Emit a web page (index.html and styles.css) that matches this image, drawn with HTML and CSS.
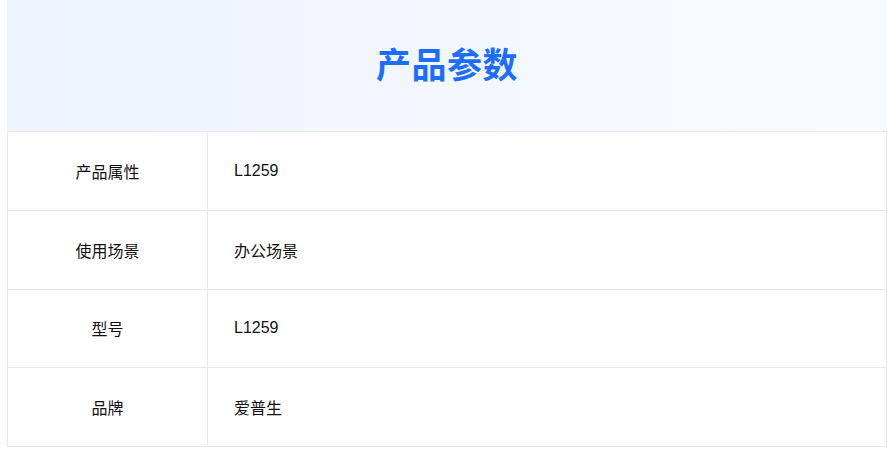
FILE: index.html
```html
<!DOCTYPE html>
<html lang="zh">
<head>
<meta charset="utf-8">
<link rel="stylesheet" href="styles.css">
</head>
<body>
<div class="params">
  <div class="params-head"><h2 class="params-title">产品参数</h2></div>
  <div class="params-table">
    <div class="row"><div class="cell label">产品属性</div><div class="cell value">L1259</div></div>
    <div class="row"><div class="cell label">使用场景</div><div class="cell value">办公场景</div></div>
    <div class="row"><div class="cell label">型号</div><div class="cell value">L1259</div></div>
    <div class="row"><div class="cell label">品牌</div><div class="cell value">爱普生</div></div>
  </div>
</div>
</body>
</html>
```
FILE: styles.css
```css
html, body {
  margin: 0;
  padding: 0;
  background: #fff;
}
body {
  font-family: "Liberation Sans", "Noto Sans CJK SC", sans-serif;
  color: #111;
}
.params {
  width: 880px;
  margin-left: 7px;
}
.params-head {
  height: 131px;
  background: linear-gradient(90deg, #edf4ff 0%, #f8fbff 100%);
  display: flex;
  align-items: center;
  justify-content: center;
}
.params-title {
  margin: -6px 0 0 0;
  font-size: 35px;
  font-weight: 700;
  color: #1d6efe;
  letter-spacing: 0.5px;
  font-family: "Noto Sans CJK SC", sans-serif;
}
.params-table {
  border-left: 1px solid #e8e8e8;
  border-right: 1px solid #e8e8e8;
  border-top: 1px solid #e8e8e8;
}
.row {
  display: flex;
  height: 77.75px;
  border-bottom: 1px solid #e8e8e8;
}
.cell {
  display: flex;
  align-items: center;
  font-size: 16px;
}
.label {
  width: 199px;
  justify-content: center;
  border-right: 1px solid #e8e8e8;
}
.value {
  flex: 1;
  padding-left: 26px;
}
```
